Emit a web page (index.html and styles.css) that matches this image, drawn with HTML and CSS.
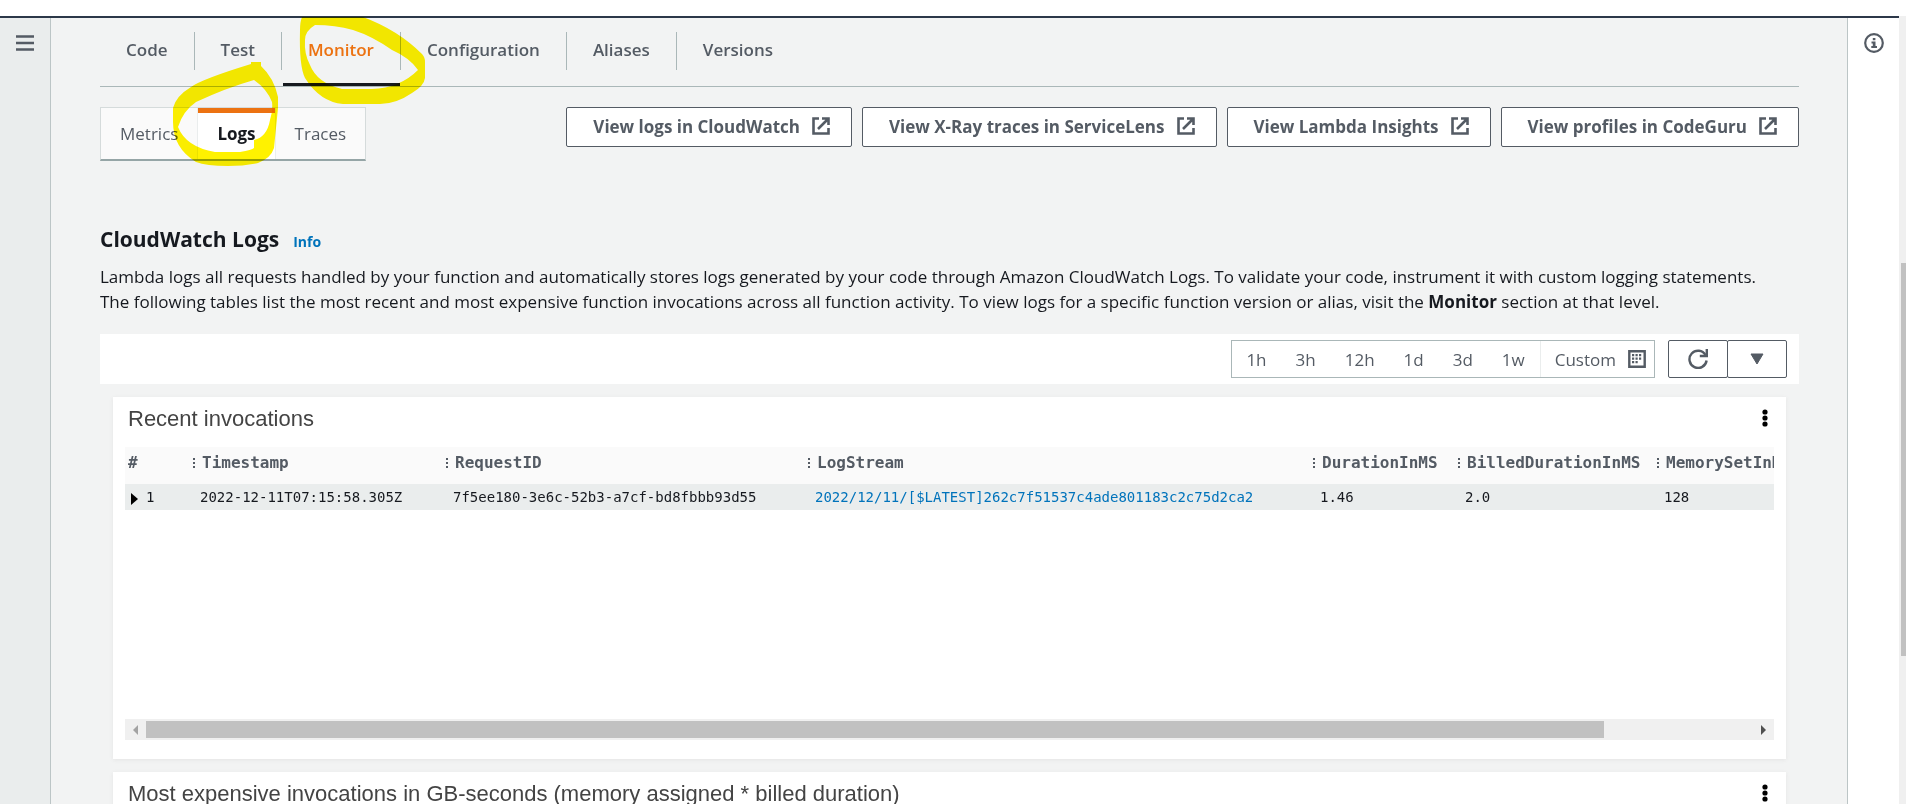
FILE: index.html
```html
<!DOCTYPE html>
<html lang="en">
<head>
<meta charset="utf-8">
<title>Lambda - Monitor</title>
<link rel="stylesheet" href="styles.css">
</head>
<body>
<svg class="defs" aria-hidden="true">
  <symbol id="external" viewBox="0 0 18 18"><path d="M7 1.5H1.5v15h15V11M10 1.5h6.5V8M16 2L6 12" fill="none" stroke="currentColor" stroke-width="2.6"/></symbol>
  <symbol id="kebab" viewBox="0 0 6 18"><circle cx="3" cy="3" r="2.6"/><circle cx="3" cy="9" r="2.6"/><circle cx="3" cy="15" r="2.6"/></symbol>
</svg>
<div class="window">
  <div class="frame">
    <nav class="side-nav" aria-label="Navigation">
      <button class="icon-button" aria-label="Open navigation">
        <svg width="18" height="16" viewBox="0 0 18 16"><path d="M0 1.500h18M0 8h18M0 14.500h18" stroke="currentColor" stroke-width="2.500"/></svg>
      </button>
    </nav>
    <main class="content">
      <nav class="tabs" aria-label="Function">
        <a class="tab" href="#code">Code</a>
        <a class="tab" href="#test">Test</a>
        <a class="tab tab-active" href="#monitor">Monitor</a>
        <a class="tab" href="#configuration">Configuration</a>
        <a class="tab" href="#aliases">Aliases</a>
        <a class="tab" href="#versions">Versions</a>
      </nav>
      <div class="actions">
        <div class="subtabs">
          <button class="subtab">Metrics</button>
          <button class="subtab subtab-active">Logs</button>
          <button class="subtab">Traces</button>
        </div>
        <div class="links">
          <button class="button">View logs in CloudWatch<svg class="external"><use href="#external"/></svg></button>
          <button class="button">View X-Ray traces in ServiceLens<svg class="external"><use href="#external"/></svg></button>
          <button class="button">View Lambda Insights<svg class="external"><use href="#external"/></svg></button>
          <button class="button">View profiles in CodeGuru<svg class="external"><use href="#external"/></svg></button>
        </div>
      </div>
      <header class="section-head">
        <h2 class="section-title">CloudWatch Logs</h2>
        <a class="info" href="#info">Info</a>
      </header>
      <p class="description">Lambda logs all requests handled by your function and automatically stores logs generated by your code through Amazon CloudWatch Logs. To validate your code, instrument it with custom logging statements. The following tables list the most recent and most expensive function invocations across all function activity. To view logs for a specific function version or alias, visit the <b>Monitor</b> section at that level.</p>
      <div class="toolbar">
        <div class="ranges">
          <button class="range">1h</button>
          <button class="range">3h</button>
          <button class="range">12h</button>
          <button class="range">1d</button>
          <button class="range">3d</button>
          <button class="range">1w</button>
          <button class="range range-custom">Custom
            <svg width="18" height="18" viewBox="0 0 18 18"><path d="M1.3 1.3h15.4v15.4H1.3z" fill="none" stroke="currentColor" stroke-width="2.4"/><path d="M7.5 4h2.2v2.2H7.500zM11 4h2.200v2.200H11zM4 7.500h2.200v2.200H4zM7.500 7.500h2.200v2.200H7.500zM11 7.500h2.200v2.200H11zM4 11h2.200v2.200H4zM7.500 11h2.200v2.200H7.500zM4 4h2.200v2.200H4z" fill="currentColor"/></svg>
          </button>
        </div>
        <div class="refresh">
          <button class="refresh-button" aria-label="Refresh">
            <svg width="20" height="20" viewBox="0 0 20 20"><path d="M17.500 6A8.600 8.600 0 1 0 18.600 11.500" fill="none" stroke="currentColor" stroke-width="2.400"/><path d="M18.800 0v7h-7" fill="none" stroke="currentColor" stroke-width="2.400"/></svg>
          </button>
          <button class="refresh-button" aria-label="Refresh options">
            <svg width="14" height="12" viewBox="0 0 14 12"><path d="M1 1h12L7 11z" fill="currentColor" stroke="currentColor" stroke-linejoin="round"/></svg>
          </button>
        </div>
      </div>
      <div class="cards">
        <section class="card">
          <header class="card-head">
            <h3 class="card-title">Recent invocations</h3>
            <button class="menu" aria-label="Widget actions"><svg width="6" height="18"><use href="#kebab"/></svg></button>
          </header>
          <div class="table-area">
            <table class="log-table">
              <colgroup><col class="col-index"><col class="col-time"><col class="col-request"><col class="col-stream"><col class="col-duration"><col class="col-billed"><col class="col-memory"></colgroup>
              <thead>
                <tr><th class="number">#</th><th class="sized">Timestamp</th><th class="sized">RequestID</th><th class="sized">LogStream</th><th class="sized">DurationInMS</th><th class="sized">BilledDurationInMS</th><th class="sized">MemorySetInMB</th></tr>
              </thead>
              <tbody>
                <tr><td class="index"><svg class="expand" width="7" height="12" viewBox="0 0 7 12"><path d="M0 0l7 6-7 6z"/></svg>1</td><td>2022-12-11T07:15:58.305Z</td><td>7f5ee180-3e6c-52b3-a7cf-bd8fbbb93d55</td><td><a class="stream" href="#stream">2022/12/11/[$LATEST]262c7f51537c4ade801183c2c75d2ca2</a></td><td>1.46</td><td>2.0</td><td>128</td></tr>
              </tbody>
            </table>
          </div>
          <div class="hscroll">
            <svg class="arrow-left" width="5" height="10" viewBox="0 0 5 10"><path d="M5 0v10L0 5z"/></svg>
            <div class="htrack"><div class="hthumb"></div></div>
            <svg class="arrow-right" width="5" height="10" viewBox="0 0 5 10"><path d="M0 0v10l5-5z"/></svg>
          </div>
        </section>
        <section class="card">
          <header class="card-head">
            <h3 class="card-title">Most expensive invocations in GB-seconds (memory assigned * billed duration)</h3>
            <button class="menu" aria-label="Widget actions"><svg width="6" height="18"><use href="#kebab"/></svg></button>
          </header>
        </section>
      </div>
    </main>
    <aside class="help-rail">
      <button class="icon-button" aria-label="Open help">
        <svg width="20" height="20" viewBox="0 0 20 20"><circle cx="10" cy="10" r="8.800" fill="none" stroke="currentColor" stroke-width="2.200"/><path d="M8.800 5h2.600v2.200H8.800zM7.500 8.500h4v4.500H13v2H7.300v-2h1.500v-2.500H7.500z" fill="currentColor"/></svg>
      </button>
    </aside>
  </div>
  <div class="vscroll"><div class="vthumb"></div></div>
</div>
<svg class="marker" width="440" height="180" viewBox="0 0 440 180" aria-hidden="true">
  <path fill-rule="evenodd" d="M302 17H363Q398 30 422 54Q425 57 425 62V78Q424 86 412 93Q396 104 380 104H343Q320 102 305 78Q299 66 300 30Q300 22 302 17ZM315 25Q305 31 305 40Q304 54 310 65Q317 83 342 89H372Q400 88 418 70Q410 58 392 50Q372 36 353 30Q335 25 315 25Z"/>
  <path fill-rule="evenodd" d="M251 62H261V66Q274 78 278 97V108L274 148Q271 158 258 163Q244 166 228 166Q206 166 196 162Q173 148 173 122V108Q176 96 191 87Q202 79 251 64ZM254 80Q226 88 196 102Q183 111 178 127Q186 147 215 152H240Q252 150 254 148V140Q267 137 270 120Q273 110 272 102Q267 89 254 80Z"/>
</svg>
</body>
</html>
```
FILE: styles.css
```css
* { box-sizing: border-box; }
body {
  margin: 0;
  height: 100vh;
  overflow: hidden;
  position: relative;
  background: #fff;
  color: #16191f;
  font: 17px/25px "Open Sans", "Noto Sans", sans-serif;
}
button {
  font: inherit;
  color: inherit;
  background: none;
  border: 0;
  padding: 0;
  margin: 0;
}
a { color: inherit; text-decoration: none; }
h2, h3, p { margin: 0; }
.defs { position: absolute; width: 0; height: 0; }
.window { display: flex; height: 100%; padding-top: 16px; }
.frame {
  flex: 1;
  min-width: 0;
  display: flex;
  border-top: 2px solid #2c3849;
}
.side-nav {
  width: 51px;
  flex: none;
  background: #eaeded;
  border-right: 1px solid #bcc5c6;
  color: #545b64;
  padding: 13px 0 0 15px;
}
.icon-button { display: flex; width: 20px; height: 24px; align-items: center; justify-content: center; }
.content {
  flex: 1;
  min-width: 0;
  overflow: hidden;
  background: #f2f3f3;
  padding: 0 48px 0 49px;
}
.help-rail {
  width: 52px;
  flex: none;
  border-left: 1px solid #bcc5c6;
  color: #545b64;
  padding: 13px 0 0 16px;
}
.vscroll { width: 7px; background: #f0f0f0; padding: 247px 0 0 2px; }
.vthumb { height: 393px; background: #c1c1c1; }

.tabs {
  display: flex;
  height: 69px;
  padding-top: 14px;
  border-bottom: 1px solid #aab7b8;
  font-weight: 600;
  color: #545b64;
}
.tab { position: relative; height: 38px; padding: 0 26px; line-height: 36px; }
.tab + .tab { border-left: 1px solid #aab7b8; }
.tab-active { color: #ec7211; }
.tab-active::after {
  content: "";
  position: absolute;
  left: 1px;
  right: 0;
  bottom: -16px;
  height: 3px;
  background: #16191f;
}

.actions { display: flex; justify-content: space-between; align-items: flex-start; padding-top: 20px; }
.subtabs {
  display: flex;
  height: 54px;
  border: 1px solid #d5dbdb;
  border-bottom: 2px solid #95a5a6;
  background: #fafafa;
  color: #545b64;
}
.subtab { padding: 0 19px; }
.subtab + .subtab { border-left: 1px solid #eaeded; }
.subtab-active {
  background: #fff;
  color: #16191f;
  font-weight: 700;
  box-shadow: inset 0 5px #ec7211;
}
.links { display: flex; gap: 10px; }
.button {
  display: flex;
  align-items: center;
  gap: 12px;
  height: 40px;
  padding: 0 21px 2px 26px;
  border: 1px solid #545b64;
  border-radius: 2px;
  background: #fff;
  color: #545b64;
  font-weight: 700;
  white-space: nowrap;
}
.external { width: 18px; height: 18px; }

.section-head { display: flex; align-items: baseline; gap: 14px; padding-top: 63px; }
.section-title { font-size: 21px; line-height: 30px; font-weight: 700; }
.info { font-size: 14px; font-weight: 700; color: #0073bb; }
.description { padding: 10px 16px 20px 0; }

.toolbar {
  display: flex;
  justify-content: flex-end;
  gap: 13px;
  padding: 6px 12px;
  background: #fff;
  color: #545b64;
}
.ranges { display: flex; gap: 1px; height: 38px; border: 1px solid #aab7b8; }
.range { padding: 0 14px; }
.range-custom { display: flex; align-items: center; gap: 12px; padding: 0 8px 0 14px; border-left: 1px solid #eaeded; }
.refresh { display: flex; }
.refresh-button {
  display: flex;
  align-items: center;
  justify-content: center;
  width: 60px;
  height: 38px;
  border: 1px solid #545b64;
  border-radius: 2px;
}
.refresh-button + .refresh-button { margin-left: -1px; }

.cards { display: flex; flex-direction: column; gap: 13px; padding: 13px 13px 0; }
.card { background: #fff; padding: 8px 12px 19px; box-shadow: 0 1px 4px #e4e4e4; }
.card-head { display: flex; justify-content: space-between; padding: 0 6px 0 3px; height: 42px; }
.card-title { font: 22px/28px "Liberation Sans", Arial, sans-serif; color: #444; white-space: nowrap; }
.menu { height: 26px; display: flex; align-items: center; }
.table-area { height: 272px; overflow: hidden; }
.log-table {
  table-layout: fixed;
  width: 1732px;
  border-collapse: collapse;
  font: 14px/26px "DejaVu Sans Mono", monospace;
  white-space: nowrap;
}
.col-index { width: 68px; }
.col-time { width: 253px; }
.col-request { width: 362px; }
.col-stream { width: 505px; }
.col-duration { width: 145px; }
.col-billed { width: 199px; }
.col-memory { width: 200px; }
.log-table th {
  height: 37px;
  padding: 0 0 6px;
  text-align: left;
  font-size: 16px;
  background: #fafafa;
  color: #545b64;
}
.log-table .number { padding-left: 3px; }
.log-table .sized::before {
  content: "";
  display: inline-block;
  width: 2px;
  height: 10px;
  margin-right: 7px;
  background: repeating-linear-gradient(#545b64 0 2px, transparent 2px 4px);
}
.log-table td { padding: 0 0 0 7px; background: #eaeded; }
.log-table .index { padding-left: 6px; }
.expand { margin-right: 8px; vertical-align: -3px; }
.stream { color: #0073bb; }
.hscroll {
  display: flex;
  align-items: center;
  justify-content: space-between;
  gap: 8px;
  height: 21px;
  padding: 0 8px;
  background: #f0f0f0;
}
.htrack { flex: 1; }
.hthumb { width: 90.7%; height: 17px; background: #c1c1c1; }
.arrow-left { fill: #a3a3a3; }
.arrow-right { fill: #505050; }

.marker {
  position: absolute;
  top: 0;
  left: 0;
  fill: #fff200;
  mix-blend-mode: multiply;
  pointer-events: none;
}
```
